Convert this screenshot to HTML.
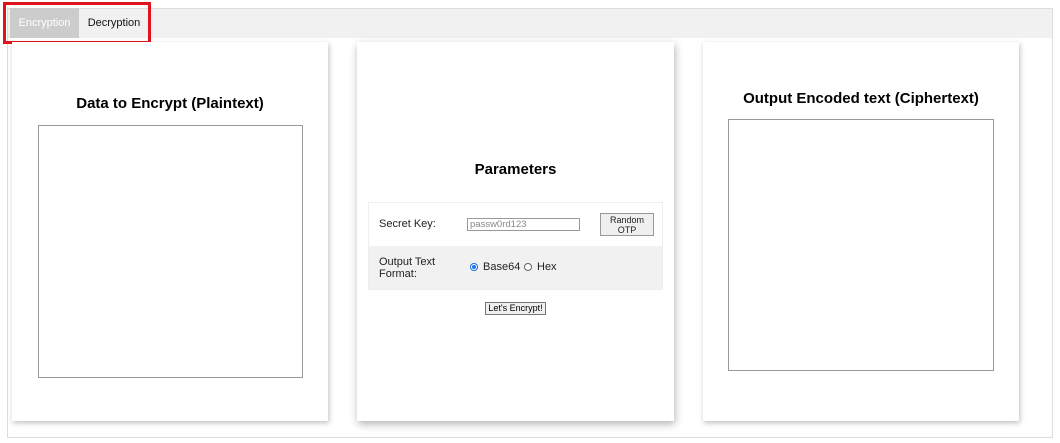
<!DOCTYPE html>
<html><head><style>
*{box-sizing:border-box}
body{margin:0;width:1060px;height:443px;background:#fff;font-family:"Liberation Sans",Arial,sans-serif;position:relative;overflow:hidden}
.outer{position:absolute;left:7px;top:8px;width:1046px;height:430px;border:1px solid #ddd}
.bar{position:absolute;left:7px;top:8px;width:1046px;height:30px;background:#f1f1f1;border:1px solid #ddd;border-bottom:none}
.tab{position:absolute;top:8px;height:30px;line-height:30px;font-size:11px;text-align:center}
.red{position:absolute;left:3px;top:2px;width:148px;height:42px;border:3px solid #e0141c}
.card{position:absolute;top:42px;height:379px;background:#fff;box-shadow:1px 2px 5px rgba(0,0,0,.25)}
h2{position:absolute;margin:0;width:100%;text-align:center;font-size:15px;font-weight:bold}
.ta{position:absolute;border:1px solid #999;background:#fff}
.row{position:absolute;left:11px;width:295px;height:44px;font-size:11px;color:#222}
</style></head><body>
<div class="outer"></div>
<div class="bar"></div>
<div class="tab" style="left:10px;width:69px;background:#ccc;color:#fff">Encryption</div>
<div class="tab" style="left:79px;width:70px;color:#111">Decryption</div>
<div class="red"></div>

<div class="card" style="left:12px;width:316px">
<h2 style="top:53px">Data to Encrypt (Plaintext)</h2>
<div class="ta" style="left:26px;top:83px;width:265px;height:253px"></div>
</div>

<div class="card" style="left:357px;width:317px;box-shadow:1px 3px 8px rgba(0,0,0,.3)">
<h2 style="top:119px">Parameters</h2>
<div class="row" style="top:160px;background:#fff;border:1px solid #eee;border-bottom:none">
<span style="position:absolute;left:10px;top:15px">Secret Key:</span>
<div style="position:absolute;left:98px;top:15px;width:113px;height:13px;border:1px solid #999;font-size:9.5px;color:#888;line-height:11px;padding-left:2px">passw0rd123</div>
<div style="position:absolute;left:231px;top:10px;width:54px;height:23px;border:1px solid #999;background:#efefef;font-size:9px;text-align:center;line-height:10px;padding-top:1px">Random<br>OTP</div>
</div>
<div class="row" style="top:204px;background:#f1f1f1;border:1px solid #eee;border-top:none">
<span style="position:absolute;left:10px;top:10px;line-height:12px">Output Text<br>Format:</span>
<span style="position:absolute;left:101px;top:17px;width:8px;height:8px;border-radius:50%;background:#1a73e8;box-shadow:0 0 0 1px #1a73e8 inset,0 0 0 2px #fff inset"></span>
<span style="position:absolute;left:114px;top:15px">Base64</span>
<span style="position:absolute;left:155px;top:17px;width:8px;height:8px;border-radius:50%;border:1px solid #666;background:#fff"></span>
<span style="position:absolute;left:168px;top:15px">Hex</span>
</div>
<div style="position:absolute;left:128px;top:260px;width:61px;height:13px;border:1px solid #777;background:#efefef;font-size:9px;text-align:center;line-height:11px">Let's Encrypt!</div>
</div>

<div class="card" style="left:703px;width:316px">
<h2 style="top:48px">Output Encoded text (Ciphertext)</h2>
<div class="ta" style="left:25px;top:77px;width:266px;height:252px"></div>
</div>
</body></html>
